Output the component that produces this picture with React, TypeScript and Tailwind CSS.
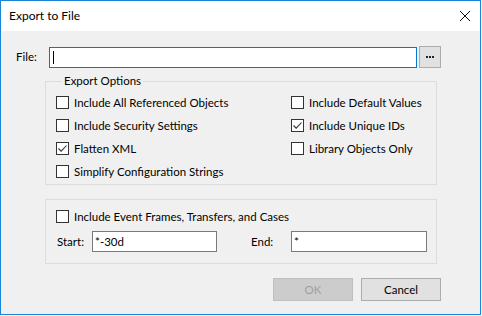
import type { ReactNode } from 'react'

const font = { fontFamily: 'Lato, "Segoe UI", sans-serif' }

function CheckBox({ checked, label }: { checked?: boolean; label: string }) {
  return (
    <div className="flex h-[23px] items-center gap-[5px]">
      <span className="flex h-[13px] w-[13px] shrink-0 items-center justify-center border border-[#333333] bg-white">
        {checked && (
          <svg width="11" height="11" viewBox="0 0 11 11">
            <path d="M1.5 5.5 L4.2 8.2 L9.5 2.5" fill="none" stroke="#333333" strokeWidth="1.1" />
          </svg>
        )}
      </span>
      <span className="whitespace-nowrap">{label}</span>
    </div>
  )
}

function Button({ children, disabled }: { children: ReactNode; disabled?: boolean }) {
  return (
    <button
      type="button"
      className={
        disabled
          ? 'h-[23px] w-[80px] border border-[#bfbfbf] bg-[#cccccc] text-[#a0a0a0]'
          : 'h-[23px] w-[80px] border border-[#adadad] bg-[#e1e1e1] text-black'
      }
    >
      {children}
    </button>
  )
}

export default function App() {
  return (
    <div className="h-[316px] w-[482px] bg-white text-[11.5px] text-black" style={font}>
      <div className="flex h-[315px] w-[481px] flex-col border border-[#1883d7]">
        <div className="flex h-[30px] shrink-0 items-center justify-between bg-white pl-[8px] pr-[9px] text-[12px]">
          <span>Export to File</span>
          <svg width="12" height="12" viewBox="0 0 12 12">
            <path d="M1 1 L11 11 M11 1 L1 11" stroke="#111111" strokeWidth="1" />
          </svg>
        </div>

        <div className="flex flex-1 flex-col bg-[#f0f0f0]">
          <div className="mt-[15px] flex items-center pl-[15px]">
            <span className="w-[33px]">File:</span>
            <div className="flex h-[21px] w-[368px] items-center border border-[#0078d7] bg-white pl-[3px]">
              <span className="h-[13px] w-px bg-black" />
            </div>
            <div className="ml-[2px] flex h-[22px] w-[22px] items-center justify-center border border-[#adadad] bg-[#e1e1e1]">
              <svg width="8" height="2" viewBox="0 0 8 2">
                <rect x="0" y="0" width="2" height="2" fill="#222" />
                <rect x="3" y="0" width="2" height="2" fill="#222" />
                <rect x="6" y="0" width="2" height="2" fill="#222" />
              </svg>
            </div>
          </div>

          <fieldset className="ml-[44px] mt-[6px] w-[392px] border border-[#dcdcdc] pb-[1px] pl-[10px] pt-[3px]">
            <legend className="ml-[6px] px-[2px] leading-[14px]">Export Options</legend>
            <div className="grid grid-cols-[235px_1fr]">
              <div className="flex flex-col">
                <CheckBox label="Include All Referenced Objects" />
                <CheckBox label="Include Security Settings" />
                <CheckBox checked label="Flatten XML" />
                <CheckBox label="Simplify Configuration Strings" />
              </div>
              <div className="flex flex-col">
                <CheckBox label="Include Default Values" />
                <CheckBox checked label="Include Unique IDs" />
                <CheckBox label="Library Objects Only" />
              </div>
            </div>
          </fieldset>

          <div className="ml-[44px] mt-[14px] w-[392px] border border-[#dcdcdc] pb-[11px] pl-[10px] pt-[5px]">
            <CheckBox label="Include Event Frames, Transfers, and Cases" />
            <div className="mt-[3px] flex items-center">
              <span className="ml-[1px] w-[35px]">Start:</span>
              <div className="flex h-[21px] w-[125px] items-center border border-[#7a7a7a] bg-white pl-[2px]">
                *-30d
              </div>
              <span className="ml-[34px] w-[40px]">End:</span>
              <div className="flex h-[21px] w-[136px] items-center border border-[#7a7a7a] bg-white pl-[2px]">
                *
              </div>
            </div>
          </div>

          <div className="mr-[39px] mt-[14px] flex justify-end gap-[8px]">
            <Button disabled>OK</Button>
            <Button>Cancel</Button>
          </div>
        </div>
      </div>
    </div>
  )
}
